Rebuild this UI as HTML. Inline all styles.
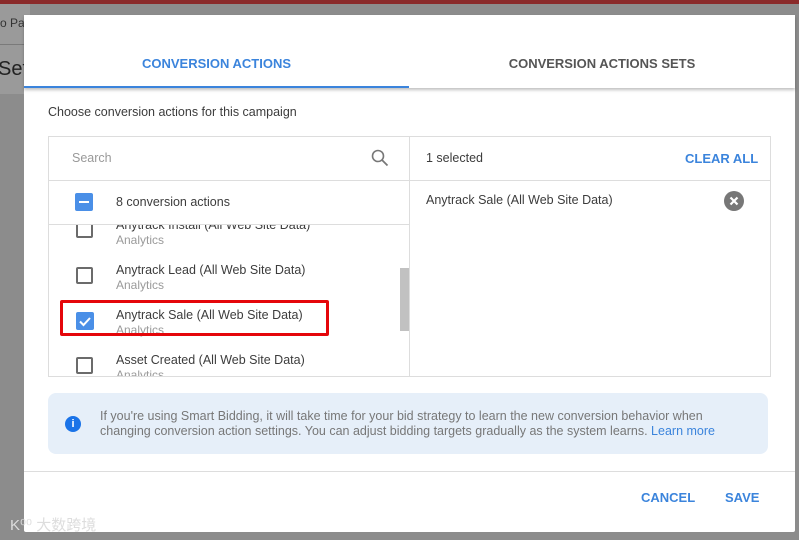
<!DOCTYPE html>
<html><head><style>
*{box-sizing:border-box;margin:0;padding:0}
body{width:799px;height:540px;overflow:hidden;background:#8c8c8c;font-family:"Liberation Sans",Arial,sans-serif;position:relative}
.abs{position:absolute}
.cb{position:absolute;width:17px;height:17px;border:2px solid #6b6b6b;border-radius:2px;background:#fff}
.t1{position:absolute;left:116px;font-size:12.5px;color:#3c3c3c}
.t2{position:absolute;left:116px;font-size:12px;color:#9a9a9a}
</style></head><body>
<div class="abs" style="left:0;top:0;width:799px;height:4px;background:#8a2a2a"></div>
<div class="abs" style="left:0;top:4px;width:30px;height:90px;background:#9a9a9a"></div>
<div class="abs" style="left:0;top:16px;font-size:12px;color:#333">o Pa</div>
<div class="abs" style="left:0;top:44px;width:30px;height:1px;background:#7a7a7a"></div>
<div class="abs" style="left:-2px;top:58px;font-size:20px;color:#222">Set</div>
<div class="abs" style="left:24px;top:15px;width:771px;height:517px;background:#fff;border-radius:2px"></div>
<div class="abs" style="left:24px;top:15px;width:771px;height:73px;background:#fff;box-shadow:0 2px 3px rgba(0,0,0,.25)"></div>
<div class="abs" style="left:24px;top:56px;width:385px;text-align:center;font-size:13px;font-weight:bold;color:#3b84dc">CONVERSION ACTIONS</div>
<div class="abs" style="left:409px;top:56px;width:386px;text-align:center;font-size:13px;font-weight:bold;color:#555">CONVERSION ACTIONS SETS</div>
<div class="abs" style="left:24px;top:86px;width:385px;height:2px;background:#3b84dc"></div>
<div class="abs" style="left:48px;top:105px;font-size:12.5px;color:#3c3c3c">Choose conversion actions for this campaign</div>
<div class="abs" style="left:48px;top:136px;width:723px;height:241px;border:1px solid #ddd;overflow:hidden">
 <div class="abs" style="left:360px;top:0;width:1px;height:241px;background:#ddd"></div>
 <div class="abs" style="left:0;top:43px;width:723px;height:1px;background:#ddd"></div>
 <div class="abs" style="left:0;top:87px;width:360px;height:1px;background:#ddd"></div>
</div>
<div class="abs" style="left:72px;top:151px;font-size:12.5px;color:#999">Search</div>
<svg class="abs" style="left:371px;top:149px" width="18" height="18" viewBox="0 0 18 18"><circle cx="7" cy="7" r="5.5" fill="none" stroke="#777" stroke-width="1.6"/><line x1="11" y1="11" x2="16.5" y2="16.5" stroke="#777" stroke-width="1.8"/></svg>
<div class="abs" style="left:75px;top:193px;width:18px;height:18px;background:#4a8fe7;border-radius:2px"><div style="position:absolute;left:4px;top:8px;width:10px;height:2px;background:#fff"></div></div>
<div class="t1" style="top:195px">8 conversion actions</div>
<div class="abs" style="left:49px;top:225px;width:351px;height:151px;overflow:hidden">
 <div class="cb" style="left:27px;top:-4px"></div>
 <div class="t1" style="left:67px;top:-7px">Anytrack Install (All Web Site Data)</div>
 <div class="t2" style="left:67px;top:8px">Analytics</div>
 <div class="cb" style="left:27px;top:42px"></div>
 <div class="t1" style="left:67px;top:38px">Anytrack Lead (All Web Site Data)</div>
 <div class="t2" style="left:67px;top:53px">Analytics</div>
 <div class="abs" style="left:27px;top:87px;width:18px;height:18px;background:#4a8fe7;border-radius:2px"><svg width="18" height="18"><path d="M4 9.5l3.5 3.5L14 6" fill="none" stroke="#fff" stroke-width="2"/></svg></div>
 <div class="t1" style="left:67px;top:83px">Anytrack Sale (All Web Site Data)</div>
 <div class="t2" style="left:67px;top:98px">Analytics</div>
 <div class="cb" style="left:27px;top:132px"></div>
 <div class="t1" style="left:67px;top:128px">Asset Created (All Web Site Data)</div>
 <div class="t2" style="left:67px;top:143px">Analytics</div>
</div>
<div class="abs" style="left:400px;top:268px;width:9px;height:63px;background:#c1c1c1"></div>
<div class="abs" style="left:60px;top:300px;width:269px;height:36px;border:3px solid #e5060a;border-radius:2px"></div>
<div class="abs" style="left:426px;top:151px;font-size:12.5px;color:#3c3c3c">1 selected</div>
<div class="abs" style="left:685px;top:151px;font-size:13px;font-weight:bold;color:#3b84dc">CLEAR ALL</div>
<div class="abs" style="left:426px;top:193px;font-size:12.5px;color:#3c3c3c">Anytrack Sale (All Web Site Data)</div>
<div class="abs" style="left:724px;top:191px;width:20px;height:20px;border-radius:50%;background:#777"><svg width="20" height="20"><path d="M6.5 6.5l7 7M13.5 6.5l-7 7" stroke="#fff" stroke-width="2.2"/></svg></div>
<div class="abs" style="left:48px;top:393px;width:720px;height:61px;background:#e6eff9;border-radius:8px"></div>
<div class="abs" style="left:65px;top:416px;width:16px;height:16px;border-radius:50%;background:#1a73e8;color:#fff;font-size:11px;font-weight:bold;text-align:center;line-height:16px">i</div>
<div class="abs" style="left:100px;top:409px;width:645px;font-size:12.5px;line-height:15px;color:#777">If you're using Smart Bidding, it will take time for your bid strategy to learn the new conversion behavior when changing conversion action settings. You can adjust bidding targets gradually as the system learns. <span style="color:#3b84dc">Learn more</span></div>
<div class="abs" style="left:24px;top:471px;width:771px;height:1px;background:#ddd"></div>
<div class="abs" style="left:641px;top:490px;font-size:13px;font-weight:bold;color:#3b84dc">CANCEL</div>
<div class="abs" style="left:725px;top:490px;font-size:13px;font-weight:bold;color:#3b84dc">SAVE</div>
<div class="abs" style="left:10px;top:514px;font-size:15px;color:#ddd;font-family:'Liberation Sans','Noto Sans CJK SC',sans-serif">K⁰⁰ 大数跨境</div>
</body></html>
